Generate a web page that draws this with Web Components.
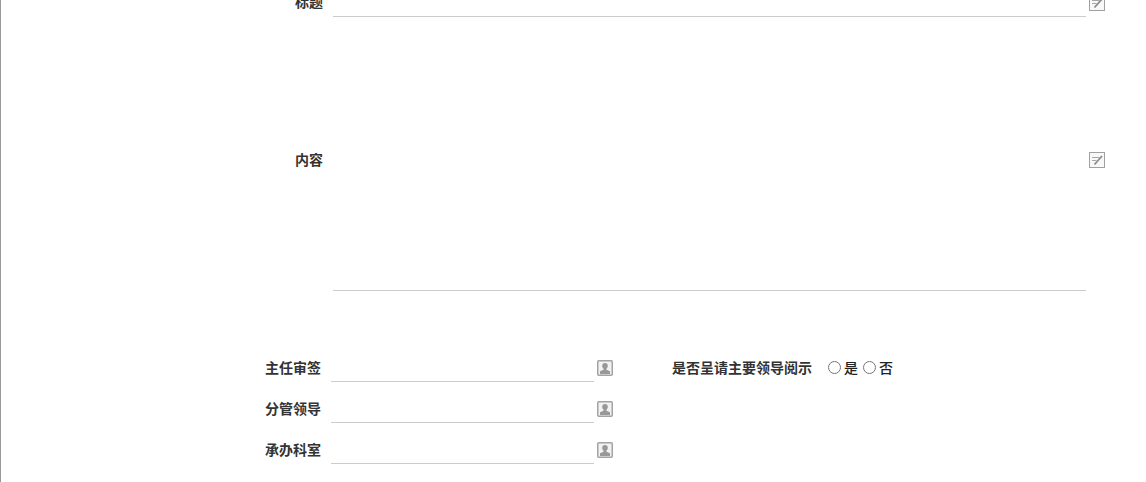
<!DOCTYPE html>
<html lang="zh"><head><meta charset="utf-8"><style>
html,body{margin:0;height:100%;overflow:hidden;background:#fff}
body{font:bold 14px "Liberation Sans","Noto Sans CJK SC",sans-serif;color:#333}
</style></head><body>
<form-page>
  <wide-row label="标题" style="--h:29px;--top:0px;--lift:4px"></wide-row>
  <wide-row label="内容" style="--h:262px;--top:12px;--lift:2px"></wide-row>
  <person-row label="主任审签" style="--top:63px">
    <radio-group label="是否呈请主要领导阅示" options="是,否"></radio-group>
  </person-row>
  <person-row label="分管领导" style="--top:13px"></person-row>
  <person-row label="承办科室" style="--top:13px"></person-row>
</form-page>
<script>
customElements.define('edit-icon',class extends HTMLElement{constructor(){super();this.attachShadow({mode:'open'}).innerHTML=`<style>:host{display:block;width:16px;height:16px}svg{display:block}</style>
<svg width="16" height="16" viewBox="0 0 16 16" fill="none"><rect x=".5" y=".5" width="15" height="15" fill="#f8f8f8" stroke="#a0a0a0"/><path d="M3 5.500h7.500M3 8.500h4.500" stroke="#a8a8a8"/><path d="M5.500 12.500 13 4" stroke="#8c8c8c" stroke-width="1.800"/></svg>`}});
customElements.define('user-icon',class extends HTMLElement{constructor(){super();this.attachShadow({mode:'open'}).innerHTML=`<style>:host{display:block;width:16px;height:16px}svg{display:block}</style>
<svg width="16" height="16" viewBox="0 0 16 16"><rect x=".75" y=".75" width="14.500" height="14.500" rx="1" fill="#f2f2f2" stroke="#a3a3a3" stroke-width="1.500"/><path d="M8 3C6.200 3 5.200 4.300 5.200 6c0 1.200.6 2.200 1.400 2.800v1L3 11.200V14h10V11.200L9.400 9.800v-1C10.200 8.200 10.800 7.200 10.800 6 10.800 4.300 9.800 3 8 3z" fill="#989898"/></svg>`}});
customElements.define('form-page',class extends HTMLElement{constructor(){super();this.attachShadow({mode:'open'}).innerHTML=`<style>:host{display:block;box-sizing:border-box;height:calc(100vh + 12px);margin-top:-12px;border-left:1px solid #999}</style><slot></slot>`}});
customElements.define('wide-row',class extends HTMLElement{constructor(){super();this.attachShadow({mode:'open'}).innerHTML=`<style>
:host{display:grid;grid-template-columns:322px 753px 19px;column-gap:10px;height:var(--h);margin-top:var(--top)}
.l{align-self:center;text-align:right;white-space:nowrap;margin-bottom:var(--lift)}
.f{border-bottom:1px solid #ccc}
.i{align-self:center;margin-left:-7px}
</style><div class="l"></div><div class="f"></div><div class="i"><edit-icon></edit-icon></div>`;
this.shadowRoot.querySelector('.l').textContent=this.getAttribute('label')}});
customElements.define('person-row',class extends HTMLElement{constructor(){super();this.attachShadow({mode:'open'}).innerHTML=`<style>
:host{display:flex;height:28px;margin-top:var(--top);align-items:center}
.l{width:320px;text-align:right;white-space:nowrap;margin-bottom:2px}
.f{width:263px;height:28px;box-sizing:border-box;margin-left:10px;border-bottom:1px solid #ccc}
user-icon{margin-left:3px}
.s{margin-left:59px;display:block;margin-bottom:2px}
</style><div class="l"></div><div class="f"></div><user-icon></user-icon><div class="s"><slot></slot></div>`;
this.shadowRoot.querySelector('.l').textContent=this.getAttribute('label')}});
customElements.define('radio-group',class extends HTMLElement{constructor(){super();const o=this.getAttribute('options').split(',');this.attachShadow({mode:'open'}).innerHTML=`<style>
:host{display:flex;align-items:center}
.t{margin-right:16px;white-space:nowrap}
label{display:flex;align-items:center;margin-right:5px;white-space:nowrap;color:#222;font-weight:500}
i{display:block;box-sizing:border-box;width:13px;height:13px;border:1px solid #767676;border-radius:50%;margin-right:3px;background:#fff}
</style><span class="t"></span>`+o.map(x=>`<label><i></i><span>${x}</span></label>`).join('');
this.shadowRoot.querySelector('.t').textContent=this.getAttribute('label')}});
</script>
</body></html>
